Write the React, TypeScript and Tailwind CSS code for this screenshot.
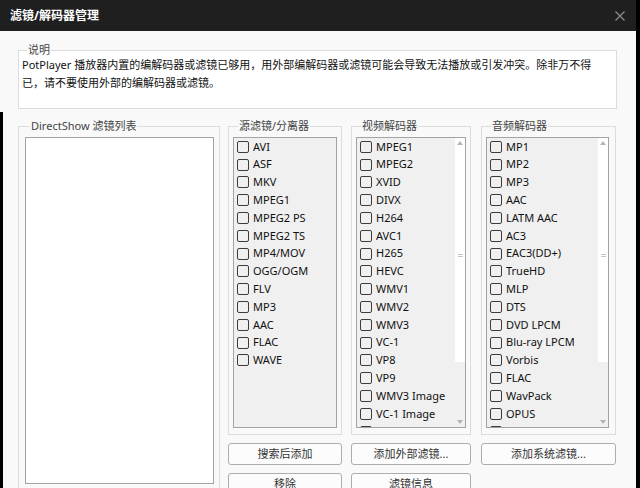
import React from 'react';

const sourceItems = ['AVI', 'ASF', 'MKV', 'MPEG1', 'MPEG2 PS', 'MPEG2 TS', 'MP4/MOV', 'OGG/OGM', 'FLV', 'MP3', 'AAC', 'FLAC', 'WAVE'];
const videoItems = ['MPEG1', 'MPEG2', 'XVID', 'DIVX', 'H264', 'AVC1', 'H265', 'HEVC', 'WMV1', 'WMV2', 'WMV3', 'VC-1', 'VP8', 'VP9', 'WMV3 Image', 'VC-1 Image', 'Theora'];
const audioItems = ['MP1', 'MP2', 'MP3', 'AAC', 'LATM AAC', 'AC3', 'EAC3(DD+)', 'TrueHD', 'MLP', 'DTS', 'DVD LPCM', 'Blu-ray LPCM', 'Vorbis', 'FLAC', 'WavPack', 'OPUS', 'ALAC'];

function CheckItem({ label }: { label: string }) {
  return (
    <div className="flex h-[17.8px] shrink-0 items-center gap-[4px] whitespace-nowrap pl-[3px]">
      <span className="h-[12px] w-[12px] shrink-0 rounded-[2px] border border-[#3c3c3c]" />
      <span>{label}</span>
    </div>
  );
}

function Arrow({ up }: { up?: boolean }) {
  return (
    <svg width="6" height="4" viewBox="0 0 6 4">
      <path d={up ? 'M0 4 L3 0 L6 4 Z' : 'M0 0 L6 0 L3 4 Z'} fill="#b4b4b4" />
    </svg>
  );
}

function CheckList({ items, width, scroll }: { items: string[]; width: string; scroll?: boolean }) {
  return (
    <div className={`mt-[4px] flex h-[291px] overflow-hidden border border-[#a3a3a3] bg-[#f0f0f0] ${width}`}>
      <div className="flex min-w-0 flex-1 flex-col">
        {items.map((it, i) => (
          <CheckItem key={i} label={it} />
        ))}
      </div>
      {scroll && (
        <div className="flex w-[10px] shrink-0 flex-col">
          <div className="flex h-[10px] items-center justify-center bg-white">
            <Arrow up />
          </div>
          <div className="flex h-[214px] items-center justify-center bg-white">
            <div className="flex flex-col gap-[1px]">
              <span className="h-px w-[5px] bg-[#c4c4c4]" />
              <span className="h-px w-[5px] bg-[#c4c4c4]" />
            </div>
          </div>
          <div className="flex-1" />
          <div className="flex h-[10px] items-center justify-center">
            <Arrow />
          </div>
        </div>
      )}
    </div>
  );
}

function Button({ children }: { children: React.ReactNode }) {
  return (
    <button className="flex h-[22px] w-full shrink-0 items-center justify-center rounded-[3px] border border-[#adadad] bg-[#fcfcfc] text-[11px] text-[#333]">
      {children}
    </button>
  );
}

function Column({ title, items, width, listWidth, scroll, buttons }: {
  title: string;
  items: string[];
  width: string;
  listWidth: string;
  scroll?: boolean;
  buttons: string[];
}) {
  return (
    <div className={`flex shrink-0 flex-col ${width}`}>
      <fieldset className="h-[316px] border border-[#dcdcdc] pl-[4px]">
        <legend className="ml-[5px] px-[1px] leading-[14px] text-[#444]">{title}</legend>
        <CheckList items={items} width={listWidth} scroll={scroll} />
      </fieldset>
      <div className="mt-[8px] flex flex-col gap-[8px]">
        {buttons.map((b) => (
          <Button key={b}>{b}</Button>
        ))}
      </div>
    </div>
  );
}

export default function App() {
  return (
    <div className="flex h-[488px] w-[640px] flex-col overflow-hidden bg-black font-['Noto_Sans','Noto_Sans_CJK_SC',sans-serif] text-[11px] text-[#111]">
      <div className="flex h-[31px] w-[636px] shrink-0 items-center justify-between bg-[#1f1f1f] pl-[10px] pr-[11px]">
        <span className="text-[12px] font-bold text-white">滤镜/解码器管理</span>
        <svg width="10" height="10" viewBox="0 0 10 10">
          <path d="M0.5 0.5 L9.5 9.5 M9.5 0.5 L0.5 9.5" stroke="#8c8c8c" strokeWidth="1.3" />
        </svg>
      </div>

      <div className="relative flex w-[636px] flex-1 flex-col bg-[#f9f9f9] pl-[18px]">
        {/* dark window edge on the left */}
        <div className="absolute bottom-0 left-0 top-[81px] w-[3px] bg-black" />

        <fieldset className="mt-[12px] h-[66px] w-[599px] border border-[#dcdcdc] bg-white pl-[3px]">
          <legend className="ml-[5px] px-[1px] leading-[14px] text-[#444]">说明</legend>
          <div className="-mt-[1px] whitespace-nowrap leading-[18px]">
            <div>PotPlayer 播放器内置的编解码器或滤镜已够用，用外部编解码器或滤镜可能会导致无法播放或引发冲突。除非万不得</div>
            <div>已，请不要使用外部的编解码器或滤镜。</div>
          </div>
        </fieldset>

        <div className="mt-[10px] flex gap-[8px]">
          <fieldset className="h-[370px] w-[202px] shrink-0 border border-[#dcdcdc] pl-[6px]">
            <legend className="ml-[5px] px-[1px] leading-[14px] text-[#444]">DirectShow 滤镜列表</legend>
            <div className="mt-[4px] h-[347px] w-[189px] border border-[#a3a3a3] bg-white" />
          </fieldset>

          <div className="flex gap-[9px]">
            <Column title="源滤镜/分离器" items={sourceItems} width="w-[114px]" listWidth="w-[104px]" buttons={['搜索后添加', '移除']} />
            <div className="flex gap-[10px]">
              <Column title="视频解码器" items={videoItems} width="w-[120px]" listWidth="w-[110px]" scroll buttons={['添加外部滤镜...', '滤镜信息']} />
              <Column title="音频解码器" items={audioItems} width="w-[135px]" listWidth="w-[123px]" scroll buttons={['添加系统滤镜...']} />
            </div>
          </div>
        </div>
      </div>
    </div>
  );
}
